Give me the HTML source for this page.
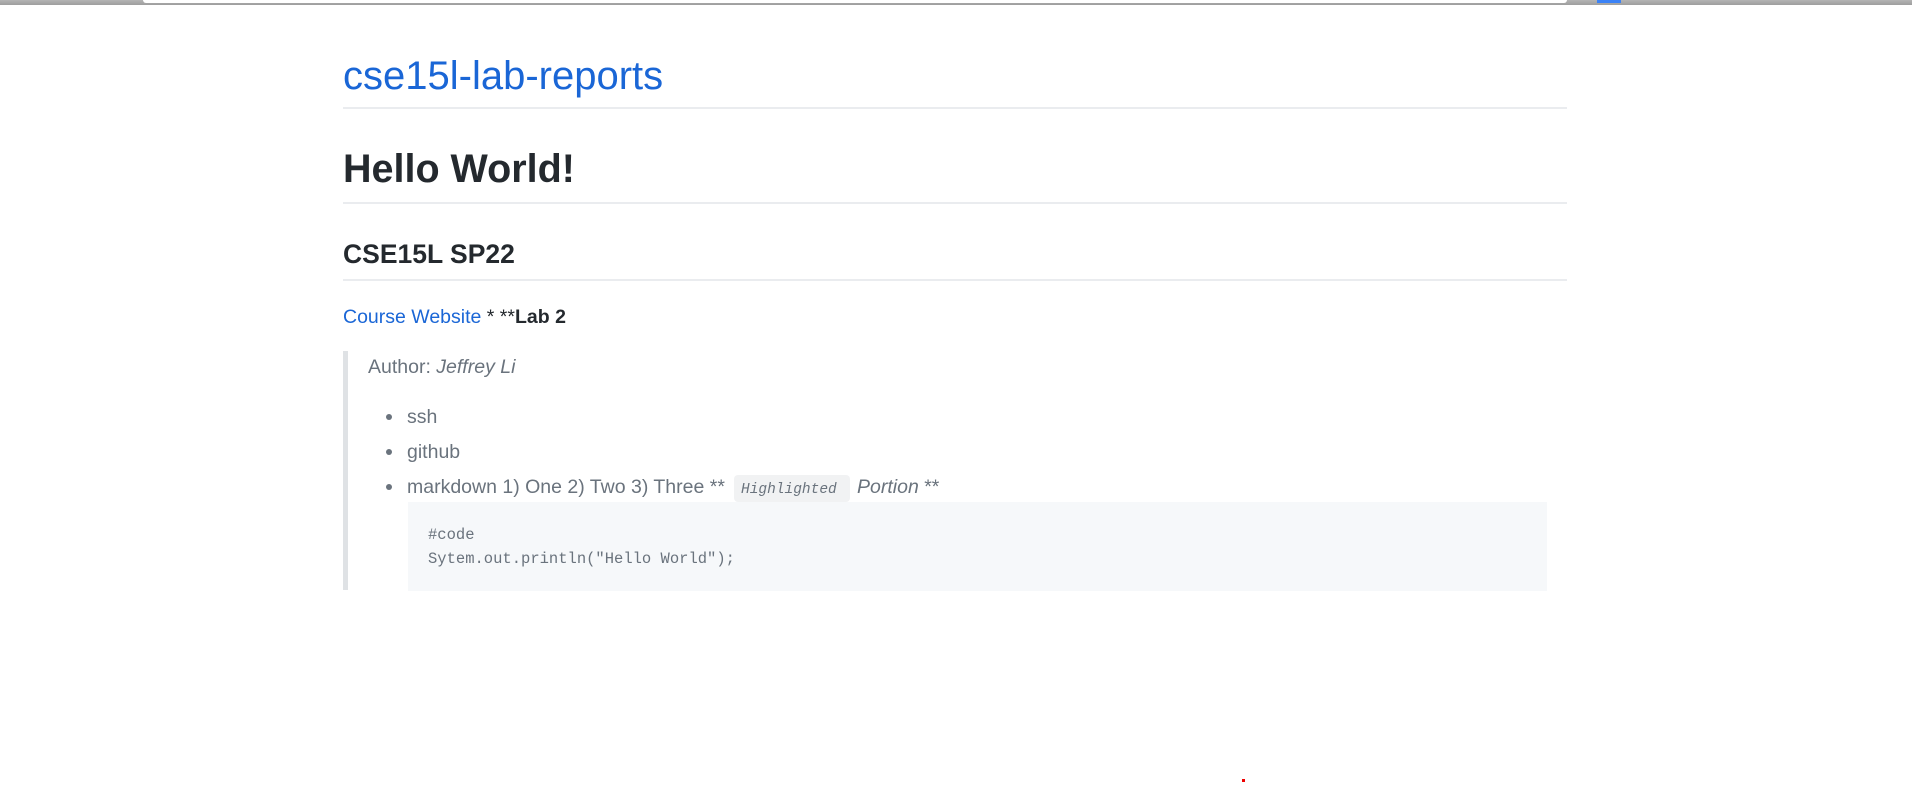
<!DOCTYPE html>
<html><head><meta charset="utf-8"><style>
body{margin:0;width:1912px;height:787px;background:#fff;position:relative;overflow:hidden;font-family:"Liberation Sans",sans-serif;}
.a{position:absolute;white-space:nowrap;line-height:1.15;}
.hr{position:absolute;left:343px;width:1224px;height:2px;background:#eaecef;}
.m{font-family:"Liberation Mono",monospace;line-height:1.133;}
</style></head><body>
<div style="position:absolute;left:0;top:0;width:1912px;height:5px;background:linear-gradient(#b4b4b4,#9e9e9e);"></div>
<div style="position:absolute;left:143px;top:0;width:1424px;height:3px;background:#fff;border-radius:0 0 3px 3px;"></div>
<div style="position:absolute;left:1597px;top:0;width:24px;height:3px;background:#3b82f6;"></div>

<div class="a" style="left:343px;top:53px;font-size:40px;color:#1a66d6;">cse15l-lab-reports</div>
<div class="hr" style="top:107px;"></div>
<div class="a" style="left:343px;top:147px;font-size:39.5px;font-weight:bold;color:#24292e;">Hello World!</div>
<div class="hr" style="top:202px;"></div>
<div class="a" style="left:343px;top:239px;font-size:26.5px;font-weight:bold;color:#24292e;">CSE15L SP22</div>
<div class="hr" style="top:279px;"></div>
<div class="a" style="left:343px;top:306px;font-size:19.5px;color:#24292e;"><span style="color:#1a66d6">Course Website</span> * **<b>Lab 2</b></div>

<div style="position:absolute;left:343px;top:351px;width:5px;height:239px;background:#dfe2e5;"></div>
<div class="a" style="left:368px;top:356px;font-size:19.5px;color:#6a737d;">Author: <i>Jeffrey Li</i></div>
<div style="position:absolute;left:386px;top:414px;width:6px;height:6px;border-radius:50%;background:#6a737d;"></div>
<div style="position:absolute;left:386px;top:449px;width:6px;height:6px;border-radius:50%;background:#6a737d;"></div>
<div style="position:absolute;left:386px;top:484px;width:6px;height:6px;border-radius:50%;background:#6a737d;"></div>
<div class="a" style="left:407px;top:406px;font-size:19.5px;color:#6a737d;">ssh</div>
<div class="a" style="left:407px;top:441px;font-size:19.5px;color:#6a737d;">github</div>
<div class="a" style="left:407px;top:476px;font-size:19.5px;color:#6a737d;">markdown 1) One 2) Two 3) Three **</div>
<div style="position:absolute;left:734px;top:475px;width:116px;height:27px;background:#f1f2f3;border-radius:4px;"></div>
<div class="a m" style="left:741px;top:482px;font-size:14.5px;color:#6a737d;font-style:italic;">Highlighted</div>
<div class="a" style="left:857px;top:476px;font-size:19.5px;color:#6a737d;"><i>Portion</i> **</div>
<div style="position:absolute;left:408px;top:502px;width:1139px;height:89px;background:#f6f8fa;"></div>
<div class="a m" style="left:428px;top:527px;font-size:15.5px;color:#6a737d;">#code</div>
<div class="a m" style="left:428px;top:551px;font-size:15.5px;color:#6a737d;">Sytem.out.println("Hello World");</div>
<div style="position:absolute;left:1242px;top:779px;width:3px;height:3px;background:#e00;"></div>
</body></html>
